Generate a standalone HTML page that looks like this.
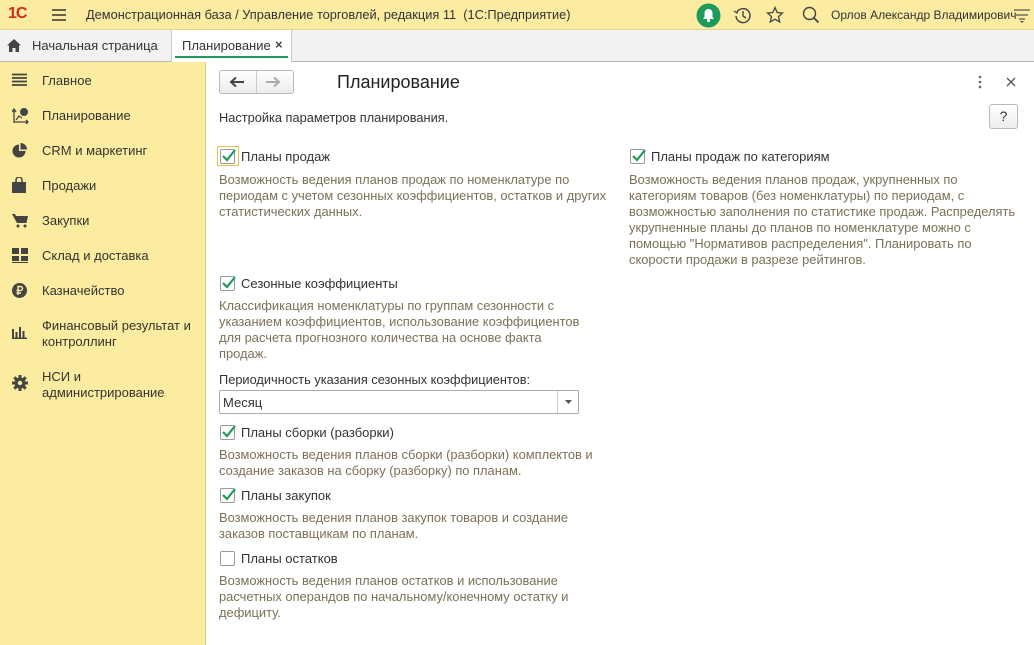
<!DOCTYPE html>
<html><head><meta charset="utf-8"><style>
*{margin:0;padding:0;box-sizing:border-box}
body{width:1034px;height:645px;overflow:hidden;font-family:"Liberation Sans","Noto Sans CJK SC",sans-serif;font-size:13px;color:#333;background:#fff;position:relative}
.top{position:absolute;left:0;top:0;width:1034px;height:30px;background:#fbeca2;border-bottom:1px solid #e6d48a}
.tabs{position:absolute;left:0;top:30px;width:1034px;height:32px;background:#f2f2f2;border-bottom:1px solid #b8b8b8}
.side{position:absolute;left:0;top:62px;width:206px;height:583px;background:#fbec9f;border-right:1px solid #d8c97a}
.abs{position:absolute;white-space:nowrap}
.nav{position:absolute;left:42px;font-size:13px;color:#333;line-height:16px}
.ic{position:absolute;left:12px}
.desc{position:absolute;color:#7d7155;font-size:12.9px;line-height:16px;white-space:nowrap}
.cb{position:absolute;width:15px;height:15px;border:1px solid #9a9a9a;background:#fff;border-radius:2px}
.cb svg{position:absolute;left:0;top:-2px}
.lbl{position:absolute;font-size:13px;color:#333}
</style></head><body>
<div class="top"></div>
<div class="abs" style="left:8px;top:5px;font-weight:bold;color:#d32a1f;font-size:16px;letter-spacing:-1px">1С</div>
<svg class="abs" style="left:52px;top:9px" width="14" height="12"><path d="M0 1h14M0 6h14M0 11h14" stroke="#333" stroke-width="1.6"/></svg>
<div class="abs" style="left:86px;top:7px;color:#333;font-size:12.8px">Демонстрационная база / Управление торговлей, редакция 11 &nbsp;(1С:Предприятие)</div>
<svg class="abs" style="left:696px;top:3px" width="25" height="25"><circle cx="12.5" cy="12.5" r="12" fill="#1d9a5c"/><path d="M7 16h11l-1.5-2v-4a4 4 0 0 0-8 0v4z" fill="#fff"/><circle cx="12.5" cy="17.5" r="1.6" fill="#fff"/></svg>
<svg class="abs" style="left:733px;top:6px" width="18" height="18"><path d="M4 6a7 7 0 1 1-1 4" fill="none" stroke="#444" stroke-width="1.4"/><path d="M1 5l3 2 1-3" fill="none" stroke="#444" stroke-width="1.3"/><path d="M10 5v5l3 2" fill="none" stroke="#444" stroke-width="1.4"/></svg>
<svg class="abs" style="left:766px;top:6px" width="18" height="18"><path d="M9 1.5l2.2 5 5.3.5-4 3.6 1.2 5.3L9 13.2 4.3 15.9l1.2-5.3-4-3.6 5.3-.5z" fill="none" stroke="#444" stroke-width="1.3"/></svg>
<svg class="abs" style="left:802px;top:6px" width="18" height="18"><circle cx="7.5" cy="7.5" r="6" fill="none" stroke="#444" stroke-width="1.4"/><path d="M12 12l4.5 4.5" stroke="#444" stroke-width="1.8"/></svg>
<div class="abs" style="left:831px;top:8px;font-size:12px;color:#333">Орлов Александр Владимирович</div>
<svg class="abs" style="left:1014px;top:8px" width="16" height="16"><path d="M0 2h16M2 7h12M5 11h6" stroke="#555" stroke-width="1.3"/><path d="M6 13h4l-2 2z" fill="#555"/></svg>

<div class="tabs"></div>
<svg class="abs" style="left:7px;top:39px" width="14" height="13"><path d="M7 0L0 6.5h2V13h3.5V9h3v4H12V6.5h2z" fill="#444"/></svg>
<div class="abs" style="left:32px;top:38px;color:#333">Начальная страница</div>
<div class="abs" style="left:171px;top:30px;width:121px;height:32px;background:#fff;border-left:1px solid #ccc;border-right:1px solid #ccc"></div>
<div class="abs" style="left:182px;top:38px;color:#333">Планирование</div>
<div class="abs" style="left:275px;top:37px;font-size:13px;color:#444;font-weight:bold">×</div>
<div class="abs" style="left:175px;top:56px;width:113px;height:2px;background:#1d9a5c"></div>

<div class="side"></div>
<svg class="ic" style="top:73px" width="15" height="13"><path d="M0 1.5h15M0 5h15M0 8.5h15M0 12h15" stroke="#444" stroke-width="1.8"/></svg>
<div class="nav" style="top:73px">Главное</div>
<svg class="ic" style="top:107px" width="17" height="17"><path d="M2 16V3M0 5l2-3 2 3M2 15h14M14 13l2 2-2 2M4 13l3-4 3 2" fill="none" stroke="#444" stroke-width="1.3"/><circle cx="12" cy="5" r="4" fill="#444"/></svg>
<div class="nav" style="top:108px">Планирование</div>
<svg class="ic" style="top:143px" width="15" height="15"><path d="M7 1.5A6.5 6.5 0 1 0 13.5 8H7z" fill="#444"/><path d="M8.5 0A6.5 6.5 0 0 1 15 6.5H8.5z" fill="#444"/></svg>
<div class="nav" style="top:143px">CRM и маркетинг</div>
<svg class="ic" style="top:177px" width="14" height="16"><path d="M4 5V3a3 3 0 0 1 6 0v2" fill="none" stroke="#444" stroke-width="1.5"/><rect x="0" y="5" width="14" height="11" fill="#444"/></svg>
<div class="nav" style="top:178px">Продажи</div>
<svg class="ic" style="top:213px" width="16" height="15"><path d="M0 1h3l1 2h12l-1.5 7H5z" fill="#444"/><circle cx="6" cy="13" r="1.5" fill="#444"/><circle cx="13" cy="13" r="1.5" fill="#444"/></svg>
<div class="nav" style="top:213px">Закупки</div>
<svg class="ic" style="top:248px" width="16" height="15"><rect x="0" y="0" width="7" height="6" fill="#444"/><rect x="9" y="0" width="7" height="6" fill="#444"/><rect x="0" y="8" width="7" height="5" fill="#444"/><rect x="9" y="8" width="7" height="5" fill="#444"/><rect x="0" y="14" width="16" height="1" fill="#444"/></svg>
<div class="nav" style="top:248px">Склад и доставка</div>
<svg class="ic" style="top:283px" width="15" height="15"><circle cx="7.5" cy="7.5" r="7.5" fill="#444"/><path d="M6 12V3.5h2.5a2 2 0 0 1 0 4H4.5M4.5 10H9" fill="none" stroke="#fbec9f" stroke-width="1.4"/></svg>
<div class="nav" style="top:283px">Казначейство</div>
<svg class="ic" style="top:326px" width="15" height="13"><path d="M1 3v9M4.5 6v6M8 1v11M11.5 5v7M0 12.5h15" stroke="#444" stroke-width="2"/></svg>
<div class="nav" style="top:318px">Финансовый результат и<br>контроллинг</div>
<svg class="ic" style="top:375px" width="16" height="16"><circle cx="8" cy="8" r="5.5" fill="#444"/><path d="M8 0v16M0 8h16M2.3 2.3l11.4 11.4M13.7 2.3L2.3 13.7" stroke="#444" stroke-width="3"/><circle cx="8" cy="8" r="2.2" fill="#fbec9f"/></svg>
<div class="nav" style="top:369px">НСИ и<br>администрирование</div>

<div class="abs" style="left:219px;top:70px;width:75px;height:24px;border:1px solid #bbb;border-radius:3px;background:linear-gradient(#fff,#ececec)"></div>
<div class="abs" style="left:256px;top:71px;width:1px;height:22px;background:#ccc"></div>
<svg class="abs" style="left:229px;top:76px" width="16" height="12"><path d="M15 6H3M7 1.5L2 6l5 4.5" fill="none" stroke="#444" stroke-width="2"/></svg>
<svg class="abs" style="left:265px;top:76px" width="16" height="12"><path d="M1 6h12M9 1.5L14 6l-5 4.5" fill="none" stroke="#aaa" stroke-width="2"/></svg>
<div class="abs" style="left:337px;top:72px;font-size:18px;color:#222">Планирование</div>
<svg class="abs" style="left:978px;top:75px" width="4" height="14"><circle cx="2" cy="2" r="1.3" fill="#666"/><circle cx="2" cy="7" r="1.3" fill="#666"/><circle cx="2" cy="12" r="1.3" fill="#666"/></svg>
<svg class="abs" style="left:1006px;top:77px" width="10" height="10"><path d="M1 1l8 8M9 1l-8 8" stroke="#555" stroke-width="1.3"/></svg>
<div class="abs" style="left:219px;top:110px;font-size:12.8px;color:#333">Настройка параметров планирования.</div>
<div class="abs" style="left:989px;top:104px;width:29px;height:25px;border:1px solid #bbb;border-radius:3px;background:linear-gradient(#fff,#eee);text-align:center;line-height:23px;font-size:14px;color:#333">?</div>

<div class="abs" style="left:217px;top:146px;width:22px;height:20px;border:1px solid #e6c24d"></div>
<div class="cb" style="left:220px;top:149px"><svg width="16" height="16"><path d="M2 8l4 4 8-10" fill="none" stroke="#1d9a5c" stroke-width="2.2"/></svg></div>
<div class="lbl" style="left:241px;top:149px">Планы продаж</div>
<div class="desc" style="left:219px;top:172px">Возможность ведения планов продаж по номенклатуре по<br>периодам с учетом сезонных коэффициентов, остатков и других<br>статистических данных.</div>

<div class="cb" style="left:630px;top:149px"><svg width="16" height="16"><path d="M2 8l4 4 8-10" fill="none" stroke="#1d9a5c" stroke-width="2.2"/></svg></div>
<div class="lbl" style="left:651px;top:149px">Планы продаж по категориям</div>
<div class="desc" style="left:629px;top:172px">Возможность ведения планов продаж, укрупненных по<br>категориям товаров (без номенклатуры) по периодам, с<br>возможностью заполнения по статистике продаж. Распределять<br>укрупненные планы до планов по номенклатуре можно с<br>помощью "Нормативов распределения". Планировать по<br>скорости продажи в разрезе рейтингов.</div>

<div class="cb" style="left:220px;top:276px"><svg width="16" height="16"><path d="M2 8l4 4 8-10" fill="none" stroke="#1d9a5c" stroke-width="2.2"/></svg></div>
<div class="lbl" style="left:241px;top:276px">Сезонные коэффициенты</div>
<div class="desc" style="left:219px;top:298px">Классификация номенклатуры по группам сезонности с<br>указанием коэффициентов, использование коэффициентов<br>для расчета прогнозного количества на основе факта<br>продаж.</div>
<div class="abs" style="left:219px;top:372px;font-size:12.8px;color:#333">Периодичность указания сезонных коэффициентов:</div>
<div class="abs" style="left:219px;top:390px;width:360px;height:24px;border:1px solid #aaa;border-radius:2px;background:#fff"></div>
<div class="abs" style="left:557px;top:391px;width:1px;height:22px;background:#ccc"></div>
<svg class="abs" style="left:565px;top:400px" width="7" height="4"><path d="M0 0h7L3.5 4z" fill="#555"/></svg>
<div class="abs" style="left:223px;top:395px;color:#333">Месяц</div>

<div class="cb" style="left:220px;top:425px"><svg width="16" height="16"><path d="M2 8l4 4 8-10" fill="none" stroke="#1d9a5c" stroke-width="2.2"/></svg></div>
<div class="lbl" style="left:241px;top:425px">Планы сборки (разборки)</div>
<div class="desc" style="left:219px;top:447px">Возможность ведения планов сборки (разборки) комплектов и<br>создание заказов на сборку (разборку) по планам.</div>

<div class="cb" style="left:220px;top:488px"><svg width="16" height="16"><path d="M2 8l4 4 8-10" fill="none" stroke="#1d9a5c" stroke-width="2.2"/></svg></div>
<div class="lbl" style="left:241px;top:488px">Планы закупок</div>
<div class="desc" style="left:219px;top:510px">Возможность ведения планов закупок товаров и создание<br>заказов поставщикам по планам.</div>

<div class="cb" style="left:220px;top:551px"></div>
<div class="lbl" style="left:241px;top:551px">Планы остатков</div>
<div class="desc" style="left:219px;top:573px">Возможность ведения планов остатков и использование<br>расчетных операндов по начальному/конечному остатку и<br>дефициту.</div>
</body></html>
